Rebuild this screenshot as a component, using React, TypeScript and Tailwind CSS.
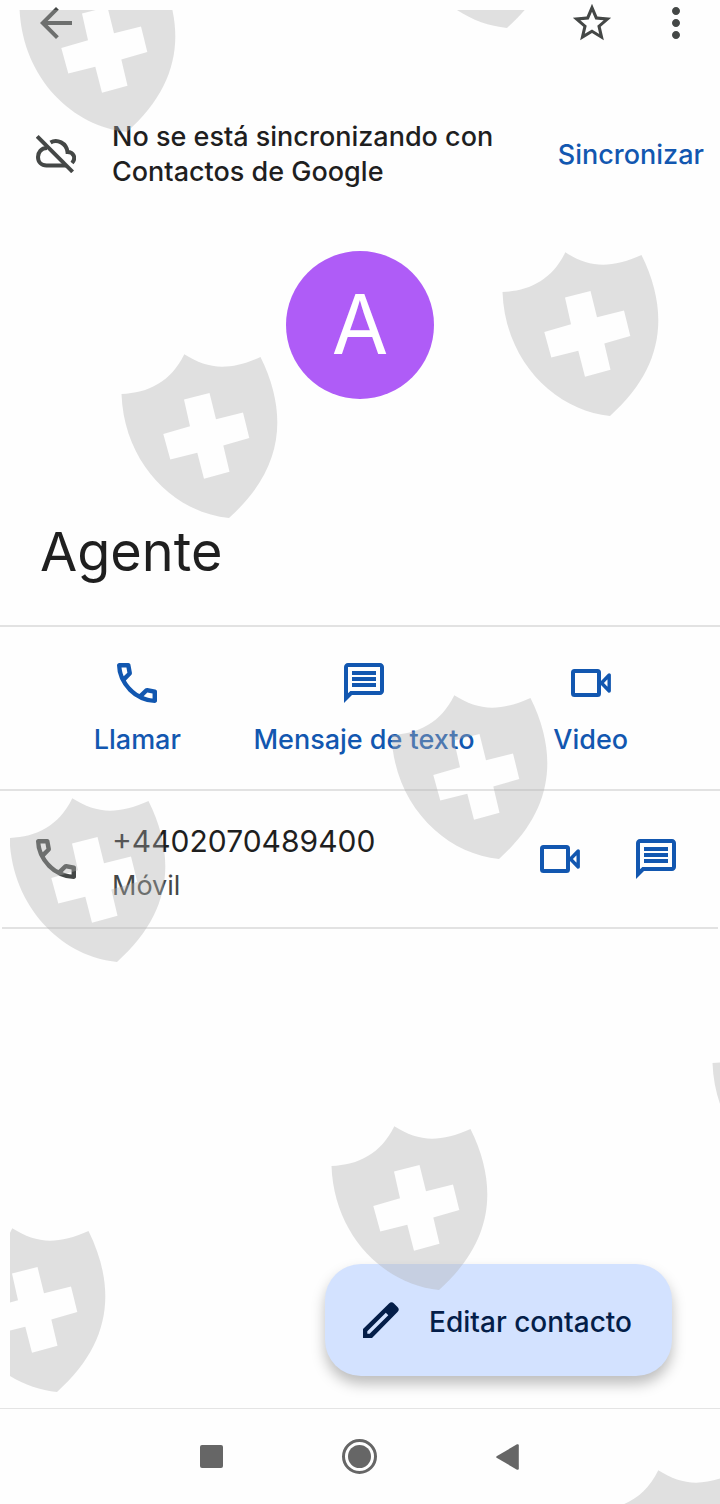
import type { ReactNode } from "react";
import {
  MdArrowBack,
  MdMoreVert,
  MdOutlineMessage,
  MdStarBorder,
} from "react-icons/md";

const SHIELD_PATH =
  "M0.5 40C27 39 50 28 63.3 0.3C87 15.5 108 17 139.500 3C168 61 162 116 108 163.900C54 159 3 110 0.500 40Z" +
  "M63 45.5L88.5 39L95 65.3L122 58.5L128.3 84L102.3 91.5L108.5 117.7L83 124.7L76.3 98.7L49.3 105.5L42.3 80L69 72.3Z";

const SHIELDS = [
  [19, -32],
  [399, -136],
  [502, 252],
  [121, 354],
  [391, 695],
  [9, 798],
  [712, 1023],
  [331, 1126],
  [-51, 1228],
  [595, 1470],
];

export default function App() {
  return (
    <div className="relative flex min-h-screen flex-col overflow-hidden bg-[#fefefe] font-['Inter','Noto_Sans',sans-serif] text-[#1f1f1f]">
      <header className="flex h-[46px] items-center justify-between pl-8 pr-5 text-[#444746]">
        <button aria-label="Atrás">
          <MdArrowBack size={48} />
        </button>
        <div className="flex items-center gap-9">
          <button aria-label="Favorito" className="flex size-12 items-center justify-center">
            <MdStarBorder size={46} />
          </button>
          <button aria-label="Más opciones">
            <MdMoreVert size={48} />
          </button>
        </div>
      </header>

      <main className="flex flex-1 flex-col">
        {/* Sync banner */}
        <section className="mt-[73px] flex items-center pl-9 pr-4">
          <CloudOffIcon />
          <p className="ml-9 flex-1 text-[27px] font-medium leading-[35px]">
            No se está sincronizando con
            <br />
            Contactos de Google
          </p>
          <button className="text-[27px] font-medium leading-[35px] text-[#1257b0]">
            Sincronizar
          </button>
        </section>

        {/* Avatar and name */}
        <div className="mx-auto mt-[62px] flex size-[148px] items-center justify-center rounded-full bg-[#af5cf7] text-[82px] leading-none text-white">
          A
        </div>
        <h1 className="mt-[117px] px-10 text-[54px] leading-[72px]">Agente</h1>

        {/* Quick actions */}
        <section className="mt-[37px] grid grid-cols-3 border-y-2 border-[#e2e2e2] pb-7 pl-6 pr-4 pt-8">
          <QuickAction label="Llamar">
            <PhoneIcon />
          </QuickAction>
          <QuickAction label="Mensaje de texto">
            <MdOutlineMessage size={48} />
          </QuickAction>
          <QuickAction label="Video">
            <VideoIcon />
          </QuickAction>
        </section>

        {/* Phone number */}
        <section className="mx-[2px] flex h-[138px] items-center border-b-2 border-[#e2e2e2] pl-[34px] pr-[38px]">
          <span className="text-[#444746]">
            <PhoneIcon />
          </span>
          <div className="ml-9 flex-1 pt-2">
            <p className="text-[30px] leading-[46px]">+4402070489400</p>
            <p className="text-[27px] leading-[44px] text-[#444746]">Móvil</p>
          </div>
          <div className="flex items-center gap-[52px] text-[#1257b0]">
            <button aria-label="Videollamada">
              <VideoIcon />
            </button>
            <button aria-label="Enviar mensaje">
              <MdOutlineMessage size={48} />
            </button>
          </div>
        </section>

        <div className="mt-auto flex justify-end pb-8 pr-12">
          <button className="flex h-28 items-center gap-[30px] rounded-[36px] bg-[#d3e2ff] pl-[38px] pr-10 text-[28px] font-medium text-[#041e49] shadow-[0_8px_14px_rgba(0,0,0,0.26)]">
            <PencilIcon />
            <span className="pt-1">Editar contacto</span>
          </button>
        </div>
      </main>

      <nav className="flex h-24 items-center justify-center border-t border-[#e4e4e4] pr-[2px] text-[#666666]">
        <button aria-label="Recientes" className="flex w-[148px] justify-center">
          <span className="size-[23px] rounded-[2px] bg-current" />
        </button>
        <button aria-label="Inicio" className="flex w-[148px] justify-center">
          <span className="flex size-[35px] items-center justify-center rounded-full border-[3px] border-current">
            <span className="size-[23px] rounded-full bg-current" />
          </span>
        </button>
        <button aria-label="Volver" className="flex w-[148px] justify-center">
          <svg width="23" height="26" viewBox="0 0 23 26" fill="currentColor">
            <path d="M0.6 12.2Q-0.2 13 0.6 13.8L21 25.7Q22.8 26.3 22.8 24.5V1.5Q22.8-0.3 21 0.3Z" />
          </svg>
        </button>
      </nav>

      <ShieldPattern />
    </div>
  );
}

function QuickAction({ label, children }: { label: string; children: ReactNode }) {
  return (
    <button className="flex flex-col items-center gap-3 text-[#1257b0]">
      <span className="flex h-12 items-center">{children}</span>
      <span className="whitespace-nowrap text-[27px] font-medium leading-[42px]">{label}</span>
    </button>
  );
}

function ShieldPattern() {
  return (
    <svg aria-hidden="true" className="pointer-events-none absolute inset-0 h-full w-full">
      <clipPath id="pattern-area">
        <rect x="10" y="10" width="100%" height="100%" />
      </clipPath>
      <g clipPath="url(#pattern-area)" fill="#b0b0b0" fillOpacity="0.38" fillRule="evenodd">
        {SHIELDS.map(([x, y]) => (
          <path key={`${x},${y}`} d={SHIELD_PATH} transform={`translate(${x} ${y})`} />
        ))}
      </g>
    </svg>
  );
}

function PhoneIcon() {
  return (
    <svg width="40" height="40" viewBox="120 -840 720 720" fill="currentColor">
      <path d="M798-120q-125 0-247-54.5T329-329Q229-429 174.5-551T120-798q0-18 12-30t30-12h162q14 0 25 9.5t13 22.5l26 140q2 16-1 27t-11 19l-97 98q20 37 47.5 71.5T387-386q31 31 65 57.5t72 48.5l94-94q9-9 23.5-13.5T670-390l138 28q14 4 23 14.5t9 23.5v162q0 18-12 30t-30 12ZM241-600l66-66-17-94h-89q5 41 14 81t26 79Zm358 358q39 17 79.5 27t81.5 13v-88l-94-19-67 67Z" />
    </svg>
  );
}

function VideoIcon() {
  return (
    <svg width="40" height="28" viewBox="0 0 40 28" fill="none" stroke="currentColor">
      <rect x="2" y="2" width="26" height="24" rx="1.5" strokeWidth="4" />
      <path d="M30.5 14L38.2 6V22Z" strokeWidth="3.4" strokeLinejoin="round" />
    </svg>
  );
}

function CloudOffIcon() {
  return (
    <svg width="40" height="38" viewBox="0 0 40 38" fill="none" stroke="#444746" strokeWidth="4">
      <path d="M1.2 1.4L36.6 36.8" />
      <path d="M11 13C5 13 2 17.5 2 22C2 27 5.5 30.5 10.5 30.5H30" />
      <path d="M14.5 7.5C21 3.5 30.5 8 31.5 17C37.500 17 40.500 23 36 28" />
    </svg>
  );
}

function PencilIcon() {
  return (
    <svg width="36" height="36" viewBox="0 0 36 36" fill="currentColor" fillRule="evenodd">
      <path d="M0 36V27L26 1.500Q28.500-0.800 31 1.500L34.500 5Q37 7.500 34.500 10L9 36ZM4.300 31.700H6.600L25.300 13.200L22.800 10.700L4.300 29.300Z" />
    </svg>
  );
}
